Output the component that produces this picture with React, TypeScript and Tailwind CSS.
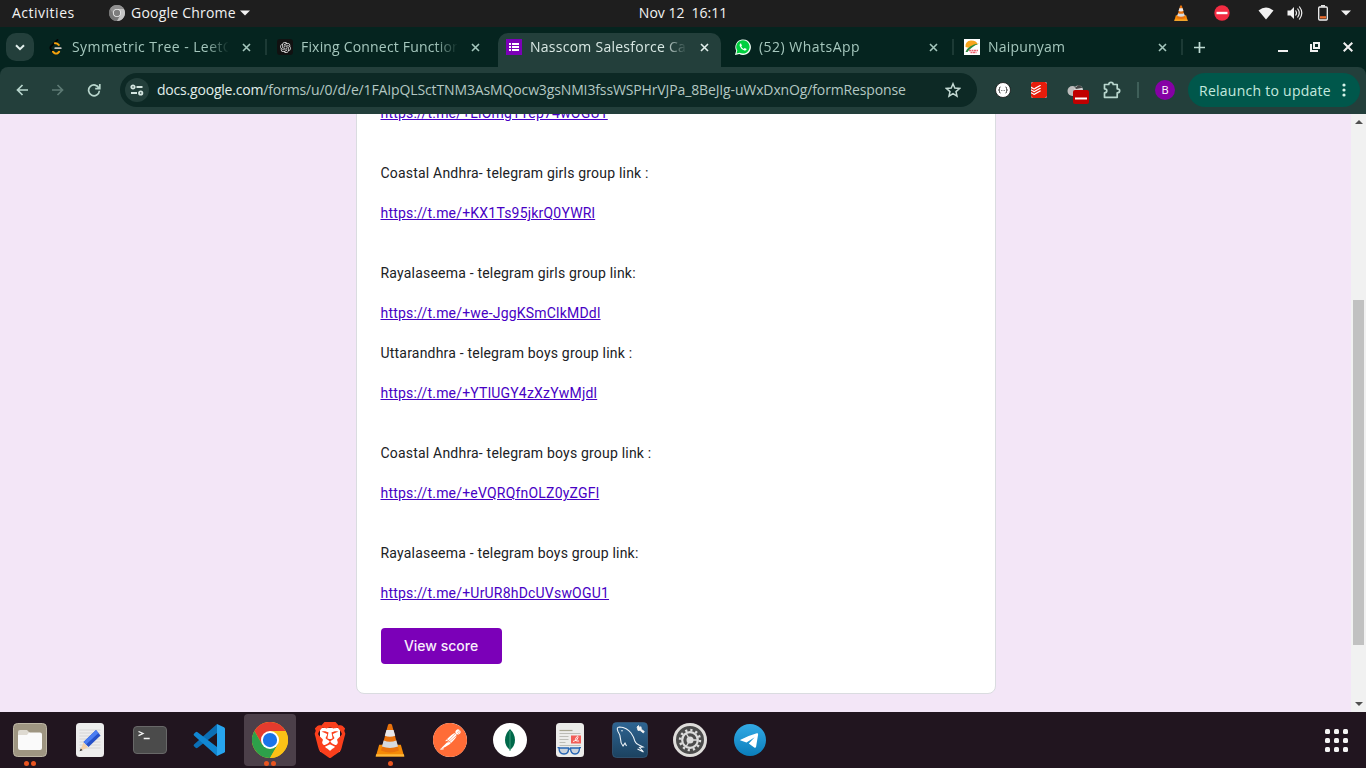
import type { ReactNode } from "react";
import { SiBrave, SiPostman, SiTodoist } from "react-icons/si";
import { RiOpenaiFill } from "react-icons/ri";

function VlcCone({ size }: { size: number }) {
  return (
    <svg width={size} height={size} viewBox="0 0 32 36" className="block">
      <path d="M4.500 23h23L31 35.500H1z" fill="#f58a07" />
      <path d="M1.300 33h29.400l.5 2.500H.8z" fill="#ffb838" />
      <path d="M14 1.500q2-1.500 4 0L25.500 29q-9.500 4.500-19 0z" fill="#e9720c" />
      <path d="M12.200 7.500h7.600l1.700 6q-5.500 2-11 0z" fill="#e8e8ea" />
      <path d="M9.300 18.500q6.700 2.500 13.400 0l1.800 6.500q-8.500 3-17 0z" fill="#d6dadf" />
    </svg>
  );
}

function ChromeLogo({ size, gray }: { size: number; gray?: boolean }) {
  return (
    <svg width={size} height={size} viewBox="0 0 48 48" className="block">
      <circle cx="24" cy="24" r="24" fill={gray ? "#8c8c8c" : "#fbc116"} />
      <path d="M3.200 12A24 24 0 0 1 44.800 12H24L13.600 30z" fill={gray ? "#909090" : "#e33b2e"} />
      <path d="M3.200 12A24 24 0 0 0 24 48L34.400 30 24 35 13.600 30z" fill={gray ? "#777" : "#2da04a"} />
      <path d="M44.800 12A24 24 0 0 1 24 48L34.400 30 34.400 18 24 12z" fill={gray ? "#c4c4c4" : "#fbc116"} />
      <circle cx="24" cy="24" r="12" fill={gray ? "#eee" : "#fff"} />
      <circle cx="24" cy="24" r="9.500" fill={gray ? "#7e7e7e" : "#1a73e8"} />
    </svg>
  );
}

function Close() {
  return (
    <svg width="9" height="9" viewBox="0 0 9 9" className="block shrink-0">
      <path d="M1 1l7 7M8 1L1 8" stroke="currentColor" strokeWidth="1.600" />
    </svg>
  );
}

function TopBar() {
  return (
    <header className="grid h-[27px] shrink-0 grid-cols-[1fr_auto_1fr] items-center bg-[#1e1e1e] text-[14px] leading-[26px] text-[#f2f2f2]">
      <div className="flex h-[26px] items-center self-start pl-3">
        <span className="w-[97px] tracking-[0.5px]">Activities</span>
        <ChromeLogo size={16} gray />
        <span className="ml-1.5 tracking-[0.22px]">Google Chrome</span>
        <svg width="10" height="6" viewBox="0 0 10 6" className="ml-1"><path d="M0 .5h10L5 5.500z" fill="#f2f2f2" /></svg>
      </div>
      <div className="flex h-[26px] gap-[7px] self-start"><span>Nov 12</span><span>16:11</span></div>
      <div className="flex h-[26px] items-center justify-end self-start pr-[15px]">
        <VlcCone size={16} />
        <svg width="16" height="16" viewBox="0 0 16 16" className="ml-[25px]">
          <circle cx="8" cy="8" r="7.700" fill="#f22c42" /><path d="M2.500 8h11" stroke="#fff" strokeWidth="2.400" />
        </svg>
        <svg width="16" height="13" viewBox="0 0 16 13" className="ml-[28px]"><path d="M.5 3.600Q8-2.400 15.500 3.600L8 12.500z" fill="#f2f2f2" /></svg>
        <svg width="16" height="16" viewBox="0 0 16 16" className="ml-[13px]" fill="none" stroke="#f2f2f2" strokeWidth="1.200">
          <path d="M.5 5.500h3L7 2v12L3.500 10.500h-3z" fill="#f2f2f2" stroke="none" />
          <path d="M8.500 5.500q2 2.500 0 5M10.500 3.500q3.500 4.500 0 9M12.300 1.500q5 6.500 0 13" />
        </svg>
        <svg width="10" height="16" viewBox="0 0 10 16" className="ml-[15px]">
          <rect x=".7" y="2" width="8.600" height="13" rx="1" fill="none" stroke="#f2f2f2" strokeWidth="1.300" />
          <path d="M3 .8h4" stroke="#f2f2f2" strokeWidth="1.500" /><path d="M2 11.200h6V13.500H2z" fill="#ee6c2c" />
        </svg>
        <svg width="10" height="6" viewBox="0 0 10 6" className="ml-[13px]"><path d="M0 .5h10L5 5.500z" fill="#f2f2f2" /></svg>
      </div>
    </header>
  );
}

function LeetIcon() {
  return (
    <svg width="16" height="16" viewBox="0 0 16 16" fill="none" className="block" strokeLinecap="round">
      <path d="M9.500 .8L3 7.300q-1.300 1.600 0 3.200l1.700 1.800" stroke="#050505" strokeWidth="1.800" />
      <path d="M7 4.300q1.800-.6 3.700 1.600M5 12.700l1.500 1.400q1.700 1 3.200 0l1.400-1.300" stroke="#f5a20c" strokeWidth="2" />
      <path d="M7.200 9.200h5.600" stroke="#c4c4c4" strokeWidth="1.700" />
    </svg>
  );
}

function FormsIcon() {
  return (
    <svg width="16" height="16" viewBox="0 0 16 16" className="block">
      <path d="M0 0h16v16H0z" fill="#7b00b8" />
      <path d="M3 4h2v2H3zM3 7h2v2H3zM3 10h2v2H3zM6 4h7v2H6zM6 7h7v2H6zM6 10h7v2H6z" fill="#fff" />
    </svg>
  );
}

function WhatsAppIcon() {
  return (
    <svg width="16" height="16" viewBox="0 0 16 16" className="block">
      <path d="M0 16l1.200-4.200A7.800 7.800 0 1 1 4.300 15z" fill="#f2fff6" />
      <path d="M1.500 14.600l.8-3A6.700 6.700 0 1 1 4.700 13.800z" fill="#00d03f" />
      <path d="M5.700 4.200q-1.600 1-1 2.800 1.300 3.500 4.700 4.500 1.900.2 2.300-1.600l-2-1-1 1q-1.600-.7-2.500-2.300l.7-.9-.8-2.200z" fill="#fff" />
    </svg>
  );
}

function NaiIcon() {
  return (
    <svg width="16" height="16" viewBox="0 0 16 16" className="block">
      <path d="M0 0h16v16H0z" fill="#fff" />
      <path d="M1.500 8Q1 2 7 1.500q6 0 6.500 4Q8 6 5.500 9z" fill="#f8a51e" />
      <path d="M1.500 13Q4 6 15 4.500 7 8 3.500 13z" fill="#2c8b3c" />
      <path d="M5 11.500h9M6.500 13.500h6" stroke="#ec6370" strokeWidth="1.500" strokeDasharray="2 .5" />
    </svg>
  );
}

function TabBody({ icon, children }: { icon: ReactNode; children: ReactNode }) {
  return (
    <>
      <span className="shrink-0">{icon}</span>
      <span className="ml-2 w-[156px] overflow-hidden whitespace-nowrap [mask-image:linear-gradient(to_right,#000_134px,transparent_157px)]">{children}</span>
    </>
  );
}

function TabStrip() {
  return (
    <div className="flex h-10 shrink-0 bg-[#05241f] text-[14px] leading-[34px] text-[#a5c7bd]">
      <div className="ml-1.5 mt-1.5 flex h-7 w-7 items-center justify-center rounded-[10px] bg-[#233f3b] text-[#e3efec]">
        <svg width="10" height="7" viewBox="0 0 10 7" fill="none"><path d="M1 1.200l4 4 4-4" stroke="currentColor" strokeWidth="2" /></svg>
      </div>
      <div className="ml-3.5 flex h-10 w-[217px] items-center tracking-[0.42px]">
        <TabBody icon={<LeetIcon />}>Symmetric Tree - LeetCode</TabBody>
        <span className="ml-3.5"><Close /></span>
      </div>
      <div className="mt-3 h-4 w-[2px] bg-[#1c3a35]" />
      <div className="ml-2.5 flex h-10 w-[221px] items-center tracking-[0.18px]">
        <TabBody icon={<span className="flex h-4 w-4 items-center justify-center rounded-[3px] bg-[#111] text-[#e6e6e6]"><RiOpenaiFill size={13} /></span>}>Fixing Connect Functionality</TabBody>
        <span className="ml-3.5"><Close /></span>
      </div>
      <div className="mt-1.5 flex h-[34px] w-[223px] items-center rounded-t-[10px] bg-[#233f3b] pb-1.5 pl-2 tracking-[0.26px] text-[#d9e8e4]">
        <TabBody icon={<FormsIcon />}>Nasscom Salesforce Career</TabBody>
        <span className="ml-3.5 text-[#e3efec]"><Close /></span>
      </div>
      <div className="ml-3.5 flex h-10 w-[217px] items-center tracking-[0.48px]">
        <TabBody icon={<WhatsAppIcon />}>(52) WhatsApp</TabBody>
        <span className="ml-3.5"><Close /></span>
      </div>
      <div className="mt-3 h-4 w-[2px] bg-[#1c3a35]" />
      <div className="ml-2.5 flex h-10 w-[217px] items-center tracking-[0.2px]">
        <TabBody icon={<NaiIcon />}>Naipunyam</TabBody>
        <span className="ml-3.5"><Close /></span>
      </div>
      <div className="mt-3 h-4 w-[2px] bg-[#1c3a35]" />
      <div className="ml-[11px] flex h-10 items-center">
        <svg width="11" height="11" viewBox="0 0 11 11"><path d="M5.500 0v11M0 5.500h11" stroke="#c0dcd4" strokeWidth="1.700" /></svg>
      </div>
      <div className="ml-auto flex h-10 items-center pr-[13px] text-[#f0f0f0]">
        <svg width="10" height="12" viewBox="0 0 10 12"><path d="M0 10h10" stroke="currentColor" strokeWidth="2" /></svg>
        <svg width="10" height="10" viewBox="0 0 10 10" className="ml-[22px]" fill="none" stroke="currentColor" strokeWidth="2"><path d="M4 1h5v5H4zM1 2v7h7" /></svg>
        <svg width="10" height="10" viewBox="0 0 10 10" className="ml-[23px]"><path d="M.7 .7l8.600 8.600M9.300 .7L.7 9.300" stroke="currentColor" strokeWidth="2" /></svg>
      </div>
    </div>
  );
}

function Toolbar() {
  return (
    <div className="shrink-0 bg-[#05241f]">
      <div className="flex h-[47px] items-center rounded-t-[8px] bg-[#233f3b] pb-px pr-1.5 text-[14px]">
        <svg width="12" height="12" viewBox="0 0 12 12" className="ml-4 shrink-0" fill="none" stroke="#b8d6cd" strokeWidth="1.700"><path d="M12 6H1.500M6.500 1L1.500 6l5 5" /></svg>
        <svg width="12" height="12" viewBox="0 0 12 12" className="ml-6 shrink-0" fill="none" stroke="#5d7a74" strokeWidth="1.700"><path d="M0 6h10.500M5.500 1l5 5-5 5" /></svg>
        <svg width="14" height="14" viewBox="0 0 14 14" className="ml-[23px] shrink-0" fill="none" stroke="#b8d6cd" strokeWidth="1.700"><path d="M12 5.300A5.400 5.400 0 1 0 12.400 7.800M12.800 1v4.600H8.200" /></svg>
        <div className="ml-[19px] flex h-[34px] w-[857px] shrink-0 items-center rounded-full bg-[#0d2925] pl-[5px] pr-4">
          <div className="flex h-6 w-6 shrink-0 items-center justify-center rounded-full bg-[#233f3b]">
            <svg width="14" height="12" viewBox="0 0 14 12" fill="none" stroke="#d5e6e1" strokeWidth="1.800"><circle cx="3" cy="3" r="1.700" /><path d="M6.500 3h6M1 9h6" /><circle cx="10.700" cy="9" r="1.700" /></svg>
          </div>
          <div className="ml-2 flex whitespace-nowrap leading-[34px]">
            <span className="tracking-[-0.2px] text-[#e0eeea]">docs.google.com</span>
            <span className="tracking-[-0.13px] text-[#b3c7c2]">/forms/u/0/d/e/1FAIpQLSctTNM3AsMQocw3gsNMI3fssWSPHrVJPa_8BeJIg-uWxDxnOg/formResponse</span>
          </div>
          <svg width="16" height="16" viewBox="0 0 16 16" className="ml-auto shrink-0" fill="none" stroke="#c3d9d3" strokeWidth="1.500"><path d="M8 1.800l1.800 4.300 4.700.4L11 9.600l1 4.600-4-2.500-4 2.500 1-4.600L1.500 6.500l4.700-.4z" /></svg>
        </div>
        <svg width="16" height="16" viewBox="0 0 16 16" className="ml-[18px] shrink-0"><circle cx="8" cy="8" r="7.500" fill="#fff" stroke="#111" strokeWidth=".8" /><path d="M5.500 5Q4.200 5 4.500 6.500T3.500 8Q4.700 8 4.500 9.500T5.500 11M10.500 5Q11.800 5 11.500 6.500T12.500 8Q11.300 8 11.500 9.500T10.500 11" fill="none" stroke="#333" strokeWidth="1" /><path d="M6 8.500h4" stroke="#888" strokeDasharray="1 .5" /></svg>
        <span className="ml-5 flex h-4 w-4 shrink-0 items-center justify-center overflow-hidden rounded-[2px] bg-white"><SiTodoist size={16} color="#e71d0c" /></span>
        <svg width="22" height="20" viewBox="0 0 22 20" className="ml-5 shrink-0 translate-y-1">
          <circle cx="5.500" cy="7" r="5" fill="#bdbdbd" /><circle cx="11.500" cy="6" r="4.500" fill="#d0d0d0" /><path d="M6 1l2.500 2.500L12 .8l3.500 3-6.500 1.200z" fill="#444" />
          <rect x="6" y="6" width="16" height="14" rx="2" fill="#c00000" /><path d="M8 14.500h12" stroke="#fff" strokeWidth="2" />
        </svg>
        <svg width="18" height="18" viewBox="0 0 18 18" className="ml-3.5 shrink-0" fill="none" stroke="#b8d6cd" strokeWidth="1.700" strokeLinejoin="round"><path d="M1.500 3.500h4.300Q5.800 1.300 8 1.300t2.200 2.200h4v4.300q2.500 0 2.500 2t-2.500 2v4.500H1.500v-4.500q2.300 0 2.300-2t-2.300-2z" /></svg>
        <div className="ml-4 h-4 w-[2px] shrink-0 bg-[#3f5f59]" />
        <div className="ml-4 flex h-5 w-5 shrink-0 items-center justify-center rounded-full bg-[#8600a5] text-[11px] text-white">B</div>
        <div className="ml-auto flex h-[34px] w-[172px] items-center rounded-full bg-[#00574b] pl-[11px] text-[#c4e9df]">
          <span className="whitespace-nowrap tracking-[0.26px]">Relaunch to update</span>
          <svg width="4" height="14" viewBox="0 0 4 14" className="ml-[11px]" fill="#d5f3ea"><circle cx="2" cy="2" r="1.600" /><circle cx="2" cy="7" r="1.600" /><circle cx="2" cy="12" r="1.600" /></svg>
        </div>
      </div>
    </div>
  );
}

function Link({ children }: { children: string }) {
  return <a href="#" className="text-[#4700c4] underline">{children}</a>;
}

function FormPage() {
  return (
    <main className="flex h-[598px] shrink-0 overflow-hidden bg-[#f3e6f7] font-['Roboto',sans-serif]">
      <div className="flex w-[1351px] flex-col items-center overflow-hidden">
        <section className="-mt-8 flex h-[612px] w-[640px] shrink-0 flex-col rounded-lg border border-[#dadce0] bg-white px-6 pt-5 text-[14px] leading-5 tracking-[0.2px] text-[#202124]">
          <p><Link>https://t.me/+LlOmg1Yep74wOGU1</Link></p>
          <p className="mt-10">Coastal Andhra- telegram girls group link :</p>
          <p className="mt-5"><Link>https://t.me/+KX1Ts95jkrQ0YWRl</Link></p>
          <p className="mt-10">Rayalaseema - telegram girls group link:</p>
          <p className="mt-5"><Link>https://t.me/+we-JggKSmClkMDdl</Link></p>
          <p className="mt-5">Uttarandhra - telegram boys group link :</p>
          <p className="mt-5"><Link>https://t.me/+YTlUGY4zXzYwMjdl</Link></p>
          <p className="mt-10">Coastal Andhra- telegram boys group link :</p>
          <p className="mt-5"><Link>https://t.me/+eVQRQfnOLZ0yZGFl</Link></p>
          <p className="mt-10">Rayalaseema - telegram boys group link:</p>
          <p className="mt-5"><Link>https://t.me/+UrUR8hDcUVswOGU1</Link></p>
          <button className="mt-[25px] h-9 w-[121px] rounded bg-[#7b00b8] font-['Inter',sans-serif] text-[14px] font-medium tracking-[0] text-[#f8effc]">View score</button>
        </section>
        <p className="mt-[17px] w-[291px] shrink-0 whitespace-nowrap text-xs text-[#5f6368]">This form was created inside of Aurora Campus Ltd.</p>
      </div>
      <div className="flex w-[15px] flex-col items-center justify-between bg-[#f1f1f1] py-1.5">
        <svg width="8" height="4" viewBox="0 0 8 4"><path d="M4 0l4 4H0z" fill="#505050" /></svg>
        <div className="mt-[176px] h-[345px] w-[11px] shrink-0 bg-[#c1c1c1]" />
        <svg width="8" height="4" viewBox="0 0 8 4" className="mt-auto"><path d="M0 0h8L4 4z" fill="#505050" /></svg>
      </div>
    </main>
  );
}

function FilesIcon() {
  return (
    <svg width="34" height="34" viewBox="0 0 34 34">
      <rect x=".5" y=".5" width="33" height="33" rx="4" fill="#9e9581" stroke="#bdb6a5" />
      <path d="M5 9q0-2 2-2h7l3 3h10v8H5z" fill="#dedad1" />
      <path d="M5 12h9l2-2.500h11q2 0 2 2V25q0 2-2 2H7q-2 0-2-2z" fill="#fafafa" />
    </svg>
  );
}

function EditorIcon() {
  return (
    <svg width="28" height="34" viewBox="0 0 28 34">
      <rect width="28" height="34" rx="3.500" fill="#ededed" />
      <path d="M3.500 7h21M3.500 10h21M3.500 13h21M3.500 16h21M3.500 19h21M3.500 22h21M3.500 25h21" stroke="#cfcfcf" strokeWidth=".8" />
      <path d="M20 7l4.500 5.500L12.500 24l-5-5z" fill="#2450c8" /><path d="M20 7l2.500 3L10 21.500 7.500 19z" fill="#4a7df2" />
      <path d="M7.500 19.500l4.500 4.800-8 3.700z" fill="#f2d0a8" /><path d="M4.800 25.500l1.800 1.800-3.100.9z" fill="#333" />
    </svg>
  );
}

function TerminalIcon() {
  return (
    <div className="flex h-7 w-[34px] rounded-[4px] border border-[#686868] bg-[#4b4b4b] pl-1 pt-1">
      <svg width="12" height="9" viewBox="0 0 12 9" fill="none" stroke="#f4f4f4" strokeWidth="1.300"><path d="M.5 .5L5 2.500.5 4.700M5.700 7.500h6" /></svg>
    </div>
  );
}

function CodeIcon() {
  return (
    <svg width="32" height="32" viewBox="0 0 32 32" className="-translate-x-px">
      <path d="M24 0L1 20.500q-.8 1 0 1.800L2.600 23.800q1 .8 2 0L24 9z" fill="#0b6fb5" />
      <path d="M24 32L1 11.500q-.8-1 0-1.800L2.600 8.200q1-.8 2 0L24 23z" fill="#1187d2" />
      <path d="M24 0l7 3.200q1 .5 1 1.500v22.600q0 1-1 1.500L24 32z" fill="#27a4ee" />
    </svg>
  );
}

function PostmanIcon() {
  return (
    <div className="flex h-[34px] w-[34px] items-center justify-center rounded-full bg-white">
      <SiPostman size={34} color="#ff6c37" />
    </div>
  );
}

function LeafIcon() {
  return (
    <svg width="34" height="34" viewBox="0 0 34 34">
      <circle cx="17" cy="17" r="17" fill="#fff" />
      <path d="M17 6q5 5 5 11t-5 10q-5-4-5-10T17 6z" fill="#00684a" />
      <path d="M17 8v20" stroke="#3f9a7a" strokeWidth="1" />
    </svg>
  );
}

function DocsIcon() {
  return (
    <svg width="28" height="34" viewBox="0 0 28 34">
      <rect width="28" height="34" rx="3.500" fill="#ececea" />
      <path d="M3.500 7.500h13" stroke="#a8a690" strokeWidth="1.200" />
      <path d="M3.500 10.500h21M3.500 13.500h9M3.500 16.500h9M3.500 19.500h6M3.500 22.500h21" stroke="#bcbcb6" />
      <path d="M15 12.500h10v8H15z" fill="#f15d57" /><path d="M17 18.500q5-1 5-4t-2 .5 3 3" stroke="#fff" fill="none" strokeWidth=".9" />
      <g fill="#c9d2dc" stroke="#2765b4" strokeWidth="1.300"><path d="M3 25h9.500q.5 6-4.500 6t-5-6zM14.500 25h9q0 6-4.500 6t-4.500-6z" /><path d="M12 26h2.500M1.500 24.700h2M23 24.700h2" /></g>
    </svg>
  );
}

function DolphinIcon() {
  return (
    <svg width="36" height="36" viewBox="0 0 36 36">
      <defs><linearGradient id="sea" x2="0" y2="1"><stop stopColor="#2e6492" /><stop offset="1" stopColor="#1c4260" /></linearGradient></defs>
      <rect x=".5" y=".5" width="35" height="35" rx="4" fill="url(#sea)" stroke="#3b6688" strokeWidth=".6" />
      <path d="M14.500 24l-1.500-3-2 3Q8.500 21 8.500 17T6 9.500Q4 5 7.500 5q7.500.5 11.500 6 3 4 4 8.500 1.500 3 4 3.500l4 2-3.500.5 4 4.500-6-3" fill="none" stroke="#eef4f8" strokeWidth="1.100" />
      <circle cx="10" cy="8.700" r=".8" fill="#eef4f8" />
      <path d="M25 5l1.500-1.500 1 2 1.500-.8.300 2.500 3 2.300-1 1.500-3.300-2.700-2 .2z" fill="#f4f4f4" stroke="#f4f4f4" strokeWidth=".8" />
    </svg>
  );
}

function SettingsIcon() {
  return (
    <svg width="34" height="34" viewBox="0 0 34 34" fill="none">
      <circle cx="17" cy="17" r="15.500" fill="#4c4c4c" stroke="#dfdddb" strokeWidth="3" />
      <circle cx="17" cy="17" r="9.900" stroke="#dcdcdc" strokeWidth="2.600" strokeDasharray="2.200 2.984" />
      <circle cx="17" cy="17" r="7.800" stroke="#dcdcdc" strokeWidth="2.200" />
      <circle cx="17" cy="17" r="3.500" fill="#dcdcdc" />
      <path d="M17 17h7M17 17l-3.500-6M17 17l-3.500 6" stroke="#dcdcdc" strokeWidth="1.400" />
    </svg>
  );
}

function TelegramIcon() {
  return (
    <svg width="32" height="32" viewBox="0 0 32 32">
      <defs><linearGradient id="sky" x2="0" y2="1"><stop stopColor="#33aae5" /><stop offset="1" stopColor="#0a7dbb" /></linearGradient></defs>
      <circle cx="16" cy="16" r="16" fill="url(#sky)" />
      <path d="M6.500 15.700Q15 11.500 22.800 9.300q1.500-.3 1.300 1.200l-2 12.200q-.4 1.700-1.900.8l-5.400-4 5.900-6.300-8.200 5.300-5.800-1.900q-1-.5-.2-.9z" fill="#fff" />
    </svg>
  );
}

function BraveIcon() {
  return (
    <div className="relative flex h-9 w-9 items-center justify-center">
      <div className="absolute h-6 w-5 bg-white" />
      <SiBrave size={36} color="#fb3f1c" className="relative" />
    </div>
  );
}

function DockItem({ children, dots = 0, active }: { children: ReactNode; dots?: number; active?: boolean }) {
  return (
    <div className="flex h-full w-[60px] items-center justify-center">
      <div className={`relative flex h-[52px] w-[52px] items-center justify-center rounded ${active ? "bg-[#4c3f49]" : ""}`}>
        {children}
        <div className="absolute inset-x-0 bottom-0 flex justify-center gap-0.5">
          {Array.from({ length: dots }, (_, i) => <span key={i} className="h-[5px] w-[5px] rounded-full bg-[#e95420]" />)}
        </div>
      </div>
    </div>
  );
}

function Dock() {
  return (
    <footer className="flex h-14 shrink-0 items-center bg-[#21151f]">
      <DockItem dots={2}><FilesIcon /></DockItem>
      <DockItem><EditorIcon /></DockItem>
      <DockItem><TerminalIcon /></DockItem>
      <DockItem><CodeIcon /></DockItem>
      <DockItem dots={2} active><ChromeLogo size={36} /></DockItem>
      <DockItem><BraveIcon /></DockItem>
      <DockItem dots={1}><VlcCone size={34} /></DockItem>
      <DockItem><PostmanIcon /></DockItem>
      <DockItem><LeafIcon /></DockItem>
      <DockItem><DocsIcon /></DockItem>
      <DockItem><DolphinIcon /></DockItem>
      <DockItem><SettingsIcon /></DockItem>
      <DockItem><TelegramIcon /></DockItem>
      <div className="ml-auto mr-[18px] grid grid-cols-3 gap-1">
        {Array.from({ length: 9 }, (_, i) => <span key={i} className="h-[5px] w-[5px] rounded-[1.5px] bg-[#f4f4f4]" />)}
      </div>
    </footer>
  );
}

export default function App() {
  return (
    <div className="flex h-[768px] w-[1366px] flex-col overflow-hidden font-['Open_Sans',sans-serif]">
      <TopBar />
      <TabStrip />
      <Toolbar />
      <FormPage />
      <Dock />
    </div>
  );
}
